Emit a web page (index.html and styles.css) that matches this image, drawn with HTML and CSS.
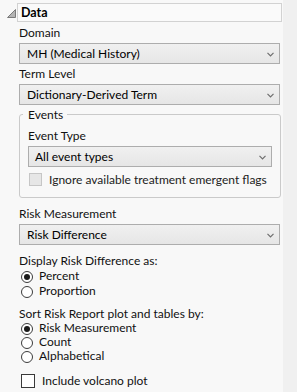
FILE: index.html
```html
<!DOCTYPE html>
<html lang="en">
<head>
  <meta charset="UTF-8">
  <title>Data</title>
  <link rel="stylesheet" href="styles.css">
</head>
<body>
  <div id="panel">
    <div class="outline-head">
      <svg class="disclosure" width="17" height="18" viewBox="0 0 17 18">
        <polygon points="15.5,6.5 15.5,14.5 7.5,14.5" fill="#b4b4b4" stroke="#7a7a7a" stroke-width="1"/>
      </svg>
      <div class="outline-title">Data</div>
    </div>

    <div class="content">
      <div class="label">Domain</div>
      <div class="combo">
        <span>MH (Medical History)</span>
        <svg class="chevron" width="7" height="5" viewBox="0 0 7 5"><path d="M0.5 0.8 L3.5 3.8 L6.5 0.8" fill="none" stroke="#6e6e6e" stroke-width="1.2"/></svg>
      </div>

      <div class="label">Term Level</div>
      <div class="combo">
        <span>Dictionary-Derived Term</span>
        <svg class="chevron" width="7" height="5" viewBox="0 0 7 5"><path d="M0.5 0.8 L3.5 3.8 L6.5 0.8" fill="none" stroke="#6e6e6e" stroke-width="1.2"/></svg>
      </div>

      <fieldset class="group">
        <legend>Events</legend>
        <div class="label">Event Type</div>
        <div class="combo">
          <span>All event types</span>
          <svg class="chevron" width="7" height="5" viewBox="0 0 7 5"><path d="M0.5 0.8 L3.5 3.8 L6.5 0.8" fill="none" stroke="#6e6e6e" stroke-width="1.2"/></svg>
        </div>
        <div class="check disabled">
          <span class="box"></span>
          <span>Ignore available treatment emergent flags</span>
        </div>
      </fieldset>

      <div class="label spaced">Risk Measurement</div>
      <div class="combo">
        <span>Risk Difference</span>
        <svg class="chevron" width="7" height="5" viewBox="0 0 7 5"><path d="M0.5 0.8 L3.5 3.8 L6.5 0.8" fill="none" stroke="#6e6e6e" stroke-width="1.2"/></svg>
      </div>

      <div class="label section">Display Risk Difference as:</div>
      <div class="radios">
        <div class="radio checked"><span class="dot"></span><span>Percent</span></div>
        <div class="radio"><span class="dot"></span><span>Proportion</span></div>
      </div>

      <div class="label section">Sort Risk Report plot and tables by:</div>
      <div class="radios tight">
        <div class="radio checked"><span class="dot"></span><span>Risk Measurement</span></div>
        <div class="radio"><span class="dot"></span><span>Count</span></div>
        <div class="radio"><span class="dot"></span><span>Alphabetical</span></div>
      </div>

      <div class="check volcano">
        <span class="box"></span>
        <span>Include volcano plot</span>
      </div>
    </div>
  </div>
</body>
</html>
```

FILE: styles.css
```css
html, body {
  margin: 0;
  padding: 0;
  height: 100%;
}

body {
  background-color: #f0f0f0;
  font-family: Lato, "Noto Sans", sans-serif;
  font-size: 12px;
  color: #111;
  overflow: hidden;
}

#panel {
  width: 283px;
  height: 392px;
  background-color: #f8f8f8;
  padding-top: 3px;
  box-sizing: border-box;
}

.outline-head {
  display: flex;
  align-items: flex-start;
}

.disclosure {
  display: block;
  flex: none;
}

.outline-title {
  width: 265px;
  height: 19px;
  box-sizing: border-box;
  border: 1px solid #d2d2d2;
  background-color: #fafafa;
  padding: 1px 0 0 3px;
  line-height: 16px;
  font-weight: bold;
  font-size: 12.5px;
  color: #000;
}

.content {
  padding: 3px 0 0 19px;
  width: 261px;
}

.label {
  line-height: 15px;
  height: 15px;
  white-space: nowrap;
}

.label.spaced {
  margin-top: 8px;
}

.label.section {
  margin-top: 8px;
}

.combo {
  display: flex;
  align-items: center;
  justify-content: space-between;
  height: 21px;
  box-sizing: border-box;
  margin: 3px 0 2px;
  padding: 0 5px 0 7px;
  border: 1px solid #adadad;
  background: linear-gradient(#f0f0f0, #e6e6e6);
  line-height: 19px;
  color: #000;
}

.chevron {
  display: block;
  margin-top: 1px;
}

.group {
  margin: 3px 0 0 0;
  padding: 7px 8px 10px 8px;
  border: 1px solid #cacaca;
  border-radius: 3px;
  width: 262px;
  box-sizing: border-box;
}

.group legend {
  margin-left: -5px;
  padding: 0 4px 0 5px;
  line-height: 13px;
}

.group .combo {
  margin-bottom: 0;
  padding-left: 6px;
}

.check {
  display: flex;
  align-items: center;
  height: 15px;
  line-height: 15px;
  margin-top: 5px;
  white-space: nowrap;
}

.check .box {
  width: 13px;
  height: 13px;
  box-sizing: border-box;
  border: 1px solid #333;
  background-color: #fff;
  margin: 0 7px 0 1px;
  flex: none;
}

.check.disabled .box {
  border-color: #c6c6c6;
  background-color: #e6e6e6;
}

.check.disabled {
  color: #222;
}

.check.volcano {
  margin-top: 10px;
}

.check.volcano .box {
  width: 14px;
  height: 14px;
  margin-left: 2px;
  border-color: #3a3a3a;
}

.radio {
  display: flex;
  align-items: flex-start;
  height: 15px;
  line-height: 15px;
}

.radios.tight .radio {
  height: 14px;
  line-height: 14px;
}

.radio .dot {
  width: 12px;
  height: 12px;
  box-sizing: border-box;
  border: 1px solid #3c3c3c;
  border-radius: 50%;
  background-color: #fff;
  margin: 3px 6px 0 2px;
  flex: none;
  display: flex;
  align-items: center;
  justify-content: center;
}

.radios.tight .radio .dot {
  margin-top: 2px;
}

.radio.checked .dot::after {
  content: "";
  width: 6px;
  height: 6px;
  border-radius: 50%;
  background-color: #1a1a1a;
}
```
